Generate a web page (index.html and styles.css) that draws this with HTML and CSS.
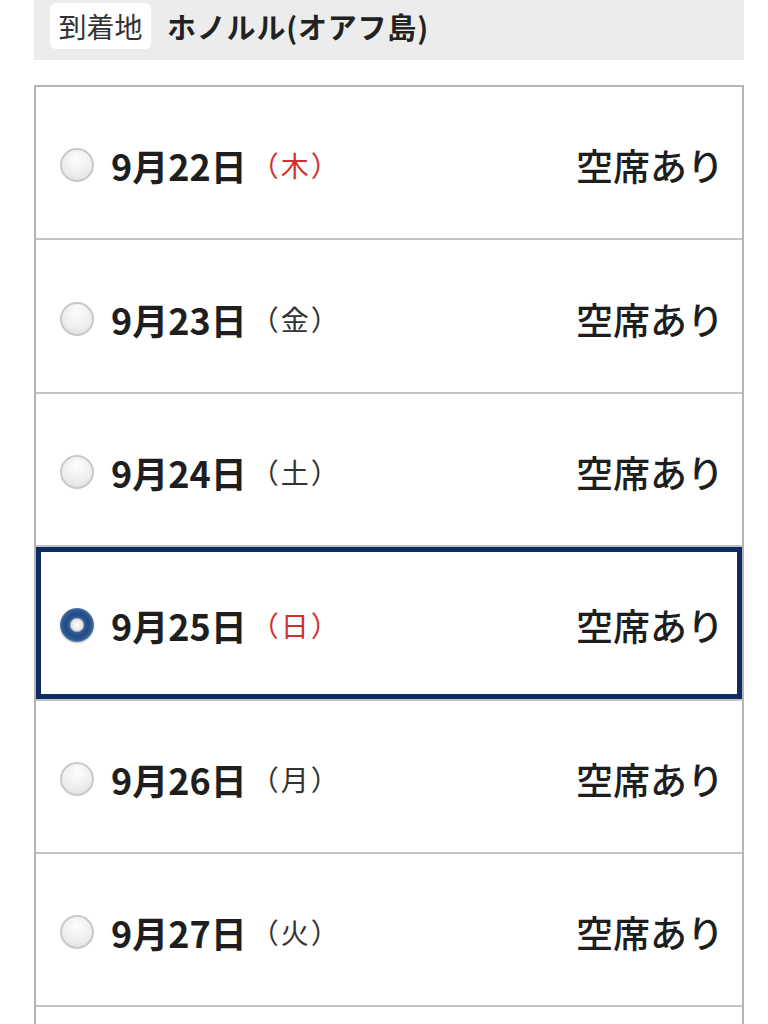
FILE: index.html
```html
<!doctype html>
<html lang="ja">
<head>
<meta charset="utf-8">
<title>到着日選択</title>
<link rel="stylesheet" href="styles.css">
</head>

<body>
<div id="page">
	<div class="arrival">
		<span class="arrival-label">到着地</span>
		<strong class="arrival-name">ホノルル(オアフ島)</strong>
	</div>

	<ul class="dates">
		<li class="date-row">
			<span class="radio"></span>
			<span class="day">9月22日</span><span class="week holiday">（木）</span>
			<span class="seat">空席あり</span>
		</li>
		<li class="date-row">
			<span class="radio"></span>
			<span class="day">9月23日</span><span class="week">（金）</span>
			<span class="seat">空席あり</span>
		</li>
		<li class="date-row">
			<span class="radio"></span>
			<span class="day">9月24日</span><span class="week">（土）</span>
			<span class="seat">空席あり</span>
		</li>
		<li class="date-row selected">
			<span class="radio checked"></span>
			<span class="day">9月25日</span><span class="week holiday">（日）</span>
			<span class="seat">空席あり</span>
		</li>
		<li class="date-row">
			<span class="radio"></span>
			<span class="day">9月26日</span><span class="week">（月）</span>
			<span class="seat">空席あり</span>
		</li>
		<li class="date-row">
			<span class="radio"></span>
			<span class="day">9月27日</span><span class="week">（火）</span>
			<span class="seat">空席あり</span>
		</li>
		<li class="date-row empty"></li>
	</ul>
</div>
</body>
</html>
```

FILE: styles.css
```css
body {
	margin: 0;
	background: #FFF;
	color: #222;
	font-family: "Noto Sans CJK JP", "Liberation Sans", sans-serif;
	overflow: hidden;
}
ul {
	list-style: none;
}
ul,li {
	padding: 0;
	margin: 0;
}
#page {
	width: 710px;
	margin: 0 0 0 34px;
}
.arrival {
	height: 60px;
	background: #ECECEC;
	display: flex;
	align-items: flex-start;
	padding: 3px 0 0 16px;
	box-sizing: border-box;
}
.arrival-label {
	width: 101px;
	height: 46px;
	line-height: 46px;
	background: #FFF;
	border-radius: 6px;
	font-size: 28px;
	color: #333;
	text-align: center;
}
.arrival-name {
	margin-left: 16px;
	line-height: 46px;
	font-size: 29px;
	font-weight: bold;
	letter-spacing: 0.8px;
	color: #222;
}
.dates {
	margin-top: 25px;
	border: 2px solid #B4B4B4;
	border-bottom: none;
}
.date-row {
	height: 146.4px;
	border-bottom: 2px solid #C4C4C4;
	display: flex;
	align-items: center;
	padding: 5px 18px 0 24px;
}
.date-row.empty {
	height: 30px;
	border-bottom: none;
}
.date-row.selected {
	box-shadow: inset 0 0 0 5px #0E2C62;
}
.radio {
	width: 34px;
	height: 34px;
	border-radius: 50%;
	box-sizing: border-box;
	border: 2px solid #C9C9C9;
	background: radial-gradient(circle at 50% 30%, #FDFDFD 0%, #EDEDED 60%, #DCDCDC 100%);
	flex: none;
}
.radio.checked {
	border: none;
	background: radial-gradient(circle at 50% 50%, #FFF 0, #E8E8E8 5px, #DADADA 6px, #3B5F95 7.5px, #1F4A86 11px, #2E5A93 15px, #5A7BA8 17px);
	box-shadow: 0 1px 2px rgba(0,0,0,.25);
}
.day {
	margin-left: 17px;
	font-size: 36px;
	font-weight: bold;
	color: #1E1E1E;
}
.week {
	margin-left: 4px;
	font-size: 28px;
	letter-spacing: 2px;
	color: #333;
}
.week.holiday {
	color: #D2302E;
}
.seat {
	margin-left: auto;
	font-size: 37px;
	font-weight: 500;
	color: #1E1E1E;
}
```
